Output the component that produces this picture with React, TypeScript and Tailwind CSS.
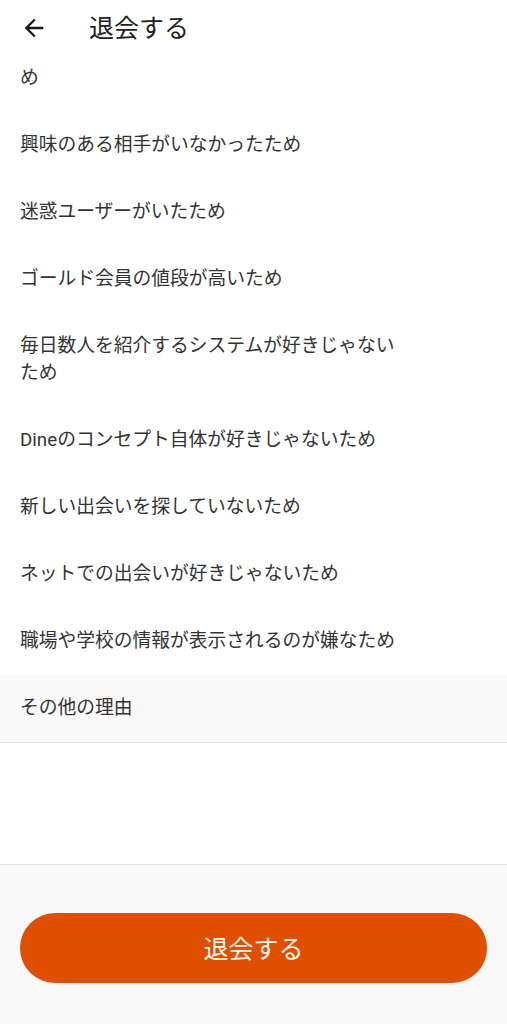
import React, { useState } from 'react'

// first entry is scrolled mostly out of view under the header
const reasons = [
  'お相手が見つかり交際することになったた\nめ',
  '興味のある相手がいなかったため',
  '迷惑ユーザーがいたため',
  'ゴールド会員の値段が高いため',
  '毎日数人を紹介するシステムが好きじゃないため',
  'Dineのコンセプト自体が好きじゃないため',
  '新しい出会いを探していないため',
  'ネットでの出会いが好きじゃないため',
  '職場や学校の情報が表示されるのが嫌なため',
  'その他の理由',
]

const BackArrow = () => (
  <svg width="28" height="28" viewBox="0 0 24 24" fill="#1f1a1a">
    <path d="M20 11H7.83l5.59-5.59L12 4l-8 8 8 8 1.41-1.41L7.83 13H20v-2z" />
  </svg>
)

const App: React.FC = () => {
  const [selected, setSelected] = useState(reasons.length - 1)

  return (
    <div
      className="flex flex-col h-[1024px] w-full bg-white text-[#333]"
      style={{ fontFamily: '"Roboto", "Noto Sans CJK JP", sans-serif' }}
    >
      {/* Header */}
      <div className="relative z-10 h-[62px] shrink-0 bg-white pt-[14px]">
        <div className="flex items-center h-[28px]">
          <button className="ml-[20px] flex items-center">
            <BackArrow />
          </button>
          <h1 className="ml-[41px] text-[25px] leading-none text-[#222]">退会する</h1>
        </div>
      </div>

      {/* Reason list, scrolled a little */}
      <div className="flex-1 overflow-hidden">
        <ul className="-mt-[44px]">
          {reasons.map((reason, i) => {
            const isActive = i === selected
            return (
              <li
                key={reason}
                onClick={() => setSelected(i)}
                className={`px-[20px] py-[20px] cursor-pointer ${
                  isActive ? 'bg-[#f9f9f9] border-b border-[#e2e2e2]' : ''
                }`}
              >
                <p className="max-w-[382px] whitespace-pre-line text-[18.75px] leading-[27px] text-[#333]">
                  {reason}
                </p>
              </li>
            )
          })}
        </ul>
      </div>

      {/* Bottom Button */}
      <div className="shrink-0 h-[160px] bg-[#f9f9f9] border-t border-[#e4e4e4] px-[20px] pt-[48px]">
        <button className="w-full h-[70px] rounded-full bg-[#e04e00] text-[#fff8ee] text-[25px] pt-[3px] flex items-center justify-center">
          退会する
        </button>
      </div>
    </div>
  )
}

export default App
